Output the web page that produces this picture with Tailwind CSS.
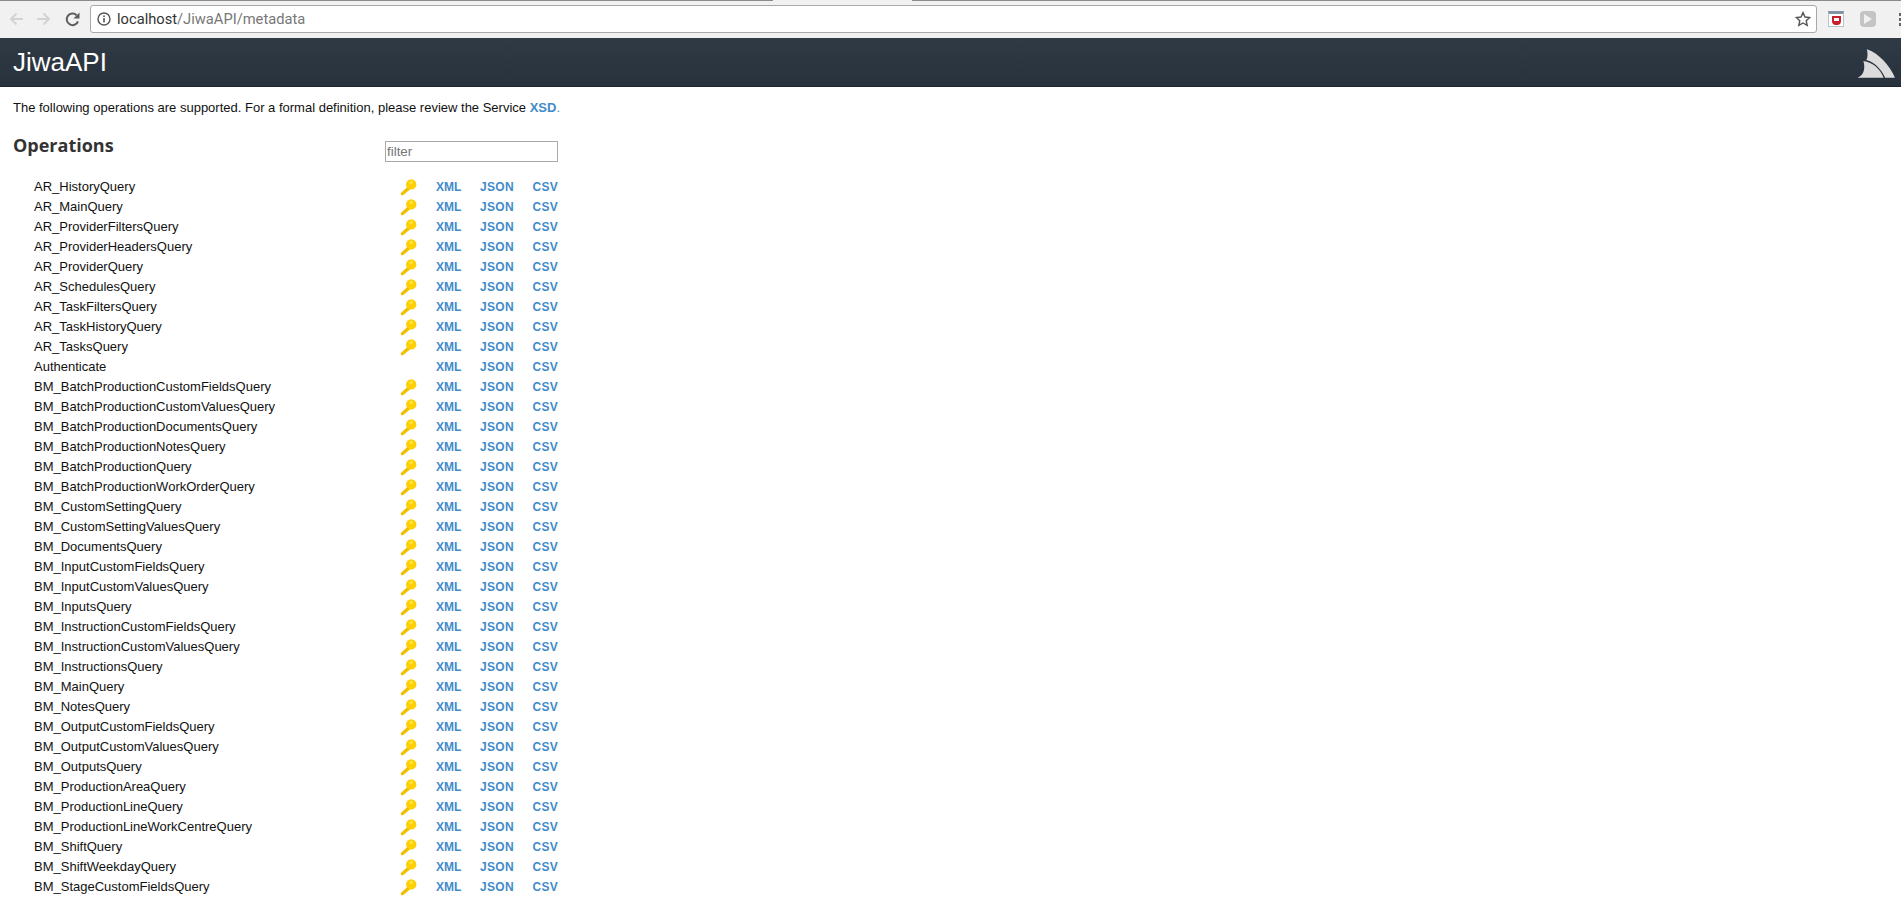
<!DOCTYPE html>
<html><head><meta charset="utf-8"><title>JiwaAPI</title>
<script src="https://cdn.jsdelivr.net/npm/@tailwindcss/browser@4"></script></head>
<body class="bg-white h-[898px] overflow-hidden font-['Liberation_Sans',sans-serif] text-[#111]">
<svg width="0" height="0" class="absolute"><defs>
<g id="k"><path d="M0.6 14.2 L8.4 7 L11 9.4 L3 16.2 L1.4 16.2 Z" fill="#f2bf00"/><circle cx="11.2" cy="5.4" r="5.2" fill="#ffd000"/><path d="M9 3.6 A3 3 0 0 1 12 1.8 A2 2 0 0 1 13 4 A3 3 0 0 1 10 5.2 Z" fill="#ffe24d"/></g>
</defs></svg>
<div class="h-[38px] bg-[#f1f1f1] relative flex items-center overflow-hidden">
  <div class="absolute top-0 left-0 w-[773px] h-px bg-[#8a8a8a]"></div>
  <div class="absolute top-0 left-[912px] right-0 h-px bg-[#8a8a8a]"></div>
  <div class="w-[90px] flex items-center shrink-0 pl-[9px] gap-[14px]">
    <svg width="14" height="14" viewBox="0 0 14 14" fill="none" stroke="#d3d3d3" stroke-width="2"><path d="M14 7H2M7.5 1.5 2 7l5.5 5.5"/></svg>
    <svg width="14" height="14" viewBox="0 0 14 14" fill="none" stroke="#d3d3d3" stroke-width="2"><path d="M0 7h12M6.5 1.5 12 7l-5.500 5.500"/></svg>
    <svg width="15" height="15" viewBox="0 0 15 15" fill="none" stroke="#5c5c5c" stroke-width="2"><path d="M13 9.300A5.800 5.800 0 1 1 11.600 3.200"/><path d="M14.500 0.500v6h-6z" fill="#5c5c5c" stroke="none"/></svg>
  </div>
  <div class="w-[1727px] h-[28px] bg-white border border-[#a9a9a9] rounded-[3px] flex items-center shrink-0 pl-[6px] pr-[5px] font-['Roboto',sans-serif] text-[14.7px]">
    <svg width="14" height="14" viewBox="0 0 14 14" fill="none" class="mr-[6px]"><circle cx="7" cy="7" r="6" stroke="#555" stroke-width="1.4"/><rect x="6.200" y="6" width="1.600" height="4.400" fill="#555"/><rect x="6.200" y="3.400" width="1.600" height="1.600" fill="#555"/></svg>
    <span class="text-[#333]">localhost</span><span class="text-[#777]">/JiwaAPI/metadata</span>
    <svg width="16" height="16" viewBox="0 0 16 16" class="ml-auto" fill="none" stroke="#555" stroke-width="1.400"><path d="M8 1.600 10 6l4.700.5-3.500 3.200 1 4.700L8 12l-4.200 2.400 1-4.700L1.300 6.500 6 6z"/></svg>
  </div>
  <div class="flex items-center shrink-0 pl-[11px]">
    <div class="w-[16px] h-[16px] bg-white border border-[#b8c4cc] border-t-[3px] border-t-[#7f95a3] flex items-center justify-center"><div class="w-[9px] h-[9px] bg-[#c8202a] rounded-b-[4px] flex items-start justify-center"><div class="w-[5px] h-[3px] bg-white mt-[2px]"></div></div></div>
    <div class="w-[16px] h-[16px] ml-[16px] bg-[#c4c4c4] rounded-[4px] flex items-center justify-center"><svg width="8" height="10" viewBox="0 0 8 10"><path d="M0 0l8 5-8 5z" fill="#f1f1f1"/></svg></div>
    <div class="flex flex-col gap-[2px] ml-[23px]"><div class="w-[3px] h-[3px] bg-[#666]"></div><div class="w-[3px] h-[3px] bg-[#666]"></div><div class="w-[3px] h-[3px] bg-[#666]"></div></div>
  </div>
</div>
<header class="h-[49px] bg-gradient-to-b from-[#2f3a45] to-[#28323c] border-b border-[#1c232a] flex items-center justify-between pl-[13px] pr-[6px]">
  <div class="text-white text-[26px] leading-none -mt-px">JiwaAPI</div>
  <svg width="38" height="29" viewBox="0 0 38.500 29" class="mt-[2px]"><path d="M10 0C22 4 33 16 38.500 29H28.500C24.500 20 18 13.500 9.500 11C11 8 11 4 10 0Z" fill="#dcdcdc"/><path d="M6.500 12C16 13.500 23.500 20 27 29H.5C6 27 9 21 6.500 12Z" fill="#dcdcdc"/></svg>
</header>
<main class="pl-[13px] w-[558px]">
  <p class="text-[13px] leading-[14px] mt-[14px] whitespace-nowrap">The following operations are supported. For a formal definition, please review the Service <a class="text-[#428bca] font-bold">XSD</a><span class="text-[#428bca]">.</span></p>
  <div class="flex justify-between items-start mt-[19px] h-[43px]">
    <h3 class="font-['Open_Sans',sans-serif] font-bold text-[18px] leading-[24px] text-[#333] -mt-[1px]">Operations</h3>
    <input placeholder="filter" class="w-[173px] h-[21px] border border-[#a9a9a9] px-px text-[13.33px] placeholder:text-[#757575] mt-[7px]">
  </div>
  <div class="pl-[21px] text-[13px] leading-[20px]">
    <div class="flex h-[20px]"><span class="w-[366px]">AR_HistoryQuery</span><svg width="17" height="17" class="mt-[2px]"><use href="#k"/></svg><a class="ml-[19px] w-[25px] text-[12px] font-bold text-[#428bca]">XML</a><a class="ml-[19px] text-[12px] tracking-[.3px] font-bold text-[#428bca]">JSON</a><a class="ml-auto text-[12px] tracking-[.3px] font-bold text-[#428bca]">CSV</a></div>
    <div class="flex h-[20px]"><span class="w-[366px]">AR_MainQuery</span><svg width="17" height="17" class="mt-[2px]"><use href="#k"/></svg><a class="ml-[19px] w-[25px] text-[12px] font-bold text-[#428bca]">XML</a><a class="ml-[19px] text-[12px] tracking-[.3px] font-bold text-[#428bca]">JSON</a><a class="ml-auto text-[12px] tracking-[.3px] font-bold text-[#428bca]">CSV</a></div>
    <div class="flex h-[20px]"><span class="w-[366px]">AR_ProviderFiltersQuery</span><svg width="17" height="17" class="mt-[2px]"><use href="#k"/></svg><a class="ml-[19px] w-[25px] text-[12px] font-bold text-[#428bca]">XML</a><a class="ml-[19px] text-[12px] tracking-[.3px] font-bold text-[#428bca]">JSON</a><a class="ml-auto text-[12px] tracking-[.3px] font-bold text-[#428bca]">CSV</a></div>
    <div class="flex h-[20px]"><span class="w-[366px]">AR_ProviderHeadersQuery</span><svg width="17" height="17" class="mt-[2px]"><use href="#k"/></svg><a class="ml-[19px] w-[25px] text-[12px] font-bold text-[#428bca]">XML</a><a class="ml-[19px] text-[12px] tracking-[.3px] font-bold text-[#428bca]">JSON</a><a class="ml-auto text-[12px] tracking-[.3px] font-bold text-[#428bca]">CSV</a></div>
    <div class="flex h-[20px]"><span class="w-[366px]">AR_ProviderQuery</span><svg width="17" height="17" class="mt-[2px]"><use href="#k"/></svg><a class="ml-[19px] w-[25px] text-[12px] font-bold text-[#428bca]">XML</a><a class="ml-[19px] text-[12px] tracking-[.3px] font-bold text-[#428bca]">JSON</a><a class="ml-auto text-[12px] tracking-[.3px] font-bold text-[#428bca]">CSV</a></div>
    <div class="flex h-[20px]"><span class="w-[366px]">AR_SchedulesQuery</span><svg width="17" height="17" class="mt-[2px]"><use href="#k"/></svg><a class="ml-[19px] w-[25px] text-[12px] font-bold text-[#428bca]">XML</a><a class="ml-[19px] text-[12px] tracking-[.3px] font-bold text-[#428bca]">JSON</a><a class="ml-auto text-[12px] tracking-[.3px] font-bold text-[#428bca]">CSV</a></div>
    <div class="flex h-[20px]"><span class="w-[366px]">AR_TaskFiltersQuery</span><svg width="17" height="17" class="mt-[2px]"><use href="#k"/></svg><a class="ml-[19px] w-[25px] text-[12px] font-bold text-[#428bca]">XML</a><a class="ml-[19px] text-[12px] tracking-[.3px] font-bold text-[#428bca]">JSON</a><a class="ml-auto text-[12px] tracking-[.3px] font-bold text-[#428bca]">CSV</a></div>
    <div class="flex h-[20px]"><span class="w-[366px]">AR_TaskHistoryQuery</span><svg width="17" height="17" class="mt-[2px]"><use href="#k"/></svg><a class="ml-[19px] w-[25px] text-[12px] font-bold text-[#428bca]">XML</a><a class="ml-[19px] text-[12px] tracking-[.3px] font-bold text-[#428bca]">JSON</a><a class="ml-auto text-[12px] tracking-[.3px] font-bold text-[#428bca]">CSV</a></div>
    <div class="flex h-[20px]"><span class="w-[366px]">AR_TasksQuery</span><svg width="17" height="17" class="mt-[2px]"><use href="#k"/></svg><a class="ml-[19px] w-[25px] text-[12px] font-bold text-[#428bca]">XML</a><a class="ml-[19px] text-[12px] tracking-[.3px] font-bold text-[#428bca]">JSON</a><a class="ml-auto text-[12px] tracking-[.3px] font-bold text-[#428bca]">CSV</a></div>
    <div class="flex h-[20px]"><span class="w-[366px]">Authenticate</span><span class="w-[17px]"></span><a class="ml-[19px] w-[25px] text-[12px] font-bold text-[#428bca]">XML</a><a class="ml-[19px] text-[12px] tracking-[.3px] font-bold text-[#428bca]">JSON</a><a class="ml-auto text-[12px] tracking-[.3px] font-bold text-[#428bca]">CSV</a></div>
    <div class="flex h-[20px]"><span class="w-[366px]">BM_BatchProductionCustomFieldsQuery</span><svg width="17" height="17" class="mt-[2px]"><use href="#k"/></svg><a class="ml-[19px] w-[25px] text-[12px] font-bold text-[#428bca]">XML</a><a class="ml-[19px] text-[12px] tracking-[.3px] font-bold text-[#428bca]">JSON</a><a class="ml-auto text-[12px] tracking-[.3px] font-bold text-[#428bca]">CSV</a></div>
    <div class="flex h-[20px]"><span class="w-[366px]">BM_BatchProductionCustomValuesQuery</span><svg width="17" height="17" class="mt-[2px]"><use href="#k"/></svg><a class="ml-[19px] w-[25px] text-[12px] font-bold text-[#428bca]">XML</a><a class="ml-[19px] text-[12px] tracking-[.3px] font-bold text-[#428bca]">JSON</a><a class="ml-auto text-[12px] tracking-[.3px] font-bold text-[#428bca]">CSV</a></div>
    <div class="flex h-[20px]"><span class="w-[366px]">BM_BatchProductionDocumentsQuery</span><svg width="17" height="17" class="mt-[2px]"><use href="#k"/></svg><a class="ml-[19px] w-[25px] text-[12px] font-bold text-[#428bca]">XML</a><a class="ml-[19px] text-[12px] tracking-[.3px] font-bold text-[#428bca]">JSON</a><a class="ml-auto text-[12px] tracking-[.3px] font-bold text-[#428bca]">CSV</a></div>
    <div class="flex h-[20px]"><span class="w-[366px]">BM_BatchProductionNotesQuery</span><svg width="17" height="17" class="mt-[2px]"><use href="#k"/></svg><a class="ml-[19px] w-[25px] text-[12px] font-bold text-[#428bca]">XML</a><a class="ml-[19px] text-[12px] tracking-[.3px] font-bold text-[#428bca]">JSON</a><a class="ml-auto text-[12px] tracking-[.3px] font-bold text-[#428bca]">CSV</a></div>
    <div class="flex h-[20px]"><span class="w-[366px]">BM_BatchProductionQuery</span><svg width="17" height="17" class="mt-[2px]"><use href="#k"/></svg><a class="ml-[19px] w-[25px] text-[12px] font-bold text-[#428bca]">XML</a><a class="ml-[19px] text-[12px] tracking-[.3px] font-bold text-[#428bca]">JSON</a><a class="ml-auto text-[12px] tracking-[.3px] font-bold text-[#428bca]">CSV</a></div>
    <div class="flex h-[20px]"><span class="w-[366px]">BM_BatchProductionWorkOrderQuery</span><svg width="17" height="17" class="mt-[2px]"><use href="#k"/></svg><a class="ml-[19px] w-[25px] text-[12px] font-bold text-[#428bca]">XML</a><a class="ml-[19px] text-[12px] tracking-[.3px] font-bold text-[#428bca]">JSON</a><a class="ml-auto text-[12px] tracking-[.3px] font-bold text-[#428bca]">CSV</a></div>
    <div class="flex h-[20px]"><span class="w-[366px]">BM_CustomSettingQuery</span><svg width="17" height="17" class="mt-[2px]"><use href="#k"/></svg><a class="ml-[19px] w-[25px] text-[12px] font-bold text-[#428bca]">XML</a><a class="ml-[19px] text-[12px] tracking-[.3px] font-bold text-[#428bca]">JSON</a><a class="ml-auto text-[12px] tracking-[.3px] font-bold text-[#428bca]">CSV</a></div>
    <div class="flex h-[20px]"><span class="w-[366px]">BM_CustomSettingValuesQuery</span><svg width="17" height="17" class="mt-[2px]"><use href="#k"/></svg><a class="ml-[19px] w-[25px] text-[12px] font-bold text-[#428bca]">XML</a><a class="ml-[19px] text-[12px] tracking-[.3px] font-bold text-[#428bca]">JSON</a><a class="ml-auto text-[12px] tracking-[.3px] font-bold text-[#428bca]">CSV</a></div>
    <div class="flex h-[20px]"><span class="w-[366px]">BM_DocumentsQuery</span><svg width="17" height="17" class="mt-[2px]"><use href="#k"/></svg><a class="ml-[19px] w-[25px] text-[12px] font-bold text-[#428bca]">XML</a><a class="ml-[19px] text-[12px] tracking-[.3px] font-bold text-[#428bca]">JSON</a><a class="ml-auto text-[12px] tracking-[.3px] font-bold text-[#428bca]">CSV</a></div>
    <div class="flex h-[20px]"><span class="w-[366px]">BM_InputCustomFieldsQuery</span><svg width="17" height="17" class="mt-[2px]"><use href="#k"/></svg><a class="ml-[19px] w-[25px] text-[12px] font-bold text-[#428bca]">XML</a><a class="ml-[19px] text-[12px] tracking-[.3px] font-bold text-[#428bca]">JSON</a><a class="ml-auto text-[12px] tracking-[.3px] font-bold text-[#428bca]">CSV</a></div>
    <div class="flex h-[20px]"><span class="w-[366px]">BM_InputCustomValuesQuery</span><svg width="17" height="17" class="mt-[2px]"><use href="#k"/></svg><a class="ml-[19px] w-[25px] text-[12px] font-bold text-[#428bca]">XML</a><a class="ml-[19px] text-[12px] tracking-[.3px] font-bold text-[#428bca]">JSON</a><a class="ml-auto text-[12px] tracking-[.3px] font-bold text-[#428bca]">CSV</a></div>
    <div class="flex h-[20px]"><span class="w-[366px]">BM_InputsQuery</span><svg width="17" height="17" class="mt-[2px]"><use href="#k"/></svg><a class="ml-[19px] w-[25px] text-[12px] font-bold text-[#428bca]">XML</a><a class="ml-[19px] text-[12px] tracking-[.3px] font-bold text-[#428bca]">JSON</a><a class="ml-auto text-[12px] tracking-[.3px] font-bold text-[#428bca]">CSV</a></div>
    <div class="flex h-[20px]"><span class="w-[366px]">BM_InstructionCustomFieldsQuery</span><svg width="17" height="17" class="mt-[2px]"><use href="#k"/></svg><a class="ml-[19px] w-[25px] text-[12px] font-bold text-[#428bca]">XML</a><a class="ml-[19px] text-[12px] tracking-[.3px] font-bold text-[#428bca]">JSON</a><a class="ml-auto text-[12px] tracking-[.3px] font-bold text-[#428bca]">CSV</a></div>
    <div class="flex h-[20px]"><span class="w-[366px]">BM_InstructionCustomValuesQuery</span><svg width="17" height="17" class="mt-[2px]"><use href="#k"/></svg><a class="ml-[19px] w-[25px] text-[12px] font-bold text-[#428bca]">XML</a><a class="ml-[19px] text-[12px] tracking-[.3px] font-bold text-[#428bca]">JSON</a><a class="ml-auto text-[12px] tracking-[.3px] font-bold text-[#428bca]">CSV</a></div>
    <div class="flex h-[20px]"><span class="w-[366px]">BM_InstructionsQuery</span><svg width="17" height="17" class="mt-[2px]"><use href="#k"/></svg><a class="ml-[19px] w-[25px] text-[12px] font-bold text-[#428bca]">XML</a><a class="ml-[19px] text-[12px] tracking-[.3px] font-bold text-[#428bca]">JSON</a><a class="ml-auto text-[12px] tracking-[.3px] font-bold text-[#428bca]">CSV</a></div>
    <div class="flex h-[20px]"><span class="w-[366px]">BM_MainQuery</span><svg width="17" height="17" class="mt-[2px]"><use href="#k"/></svg><a class="ml-[19px] w-[25px] text-[12px] font-bold text-[#428bca]">XML</a><a class="ml-[19px] text-[12px] tracking-[.3px] font-bold text-[#428bca]">JSON</a><a class="ml-auto text-[12px] tracking-[.3px] font-bold text-[#428bca]">CSV</a></div>
    <div class="flex h-[20px]"><span class="w-[366px]">BM_NotesQuery</span><svg width="17" height="17" class="mt-[2px]"><use href="#k"/></svg><a class="ml-[19px] w-[25px] text-[12px] font-bold text-[#428bca]">XML</a><a class="ml-[19px] text-[12px] tracking-[.3px] font-bold text-[#428bca]">JSON</a><a class="ml-auto text-[12px] tracking-[.3px] font-bold text-[#428bca]">CSV</a></div>
    <div class="flex h-[20px]"><span class="w-[366px]">BM_OutputCustomFieldsQuery</span><svg width="17" height="17" class="mt-[2px]"><use href="#k"/></svg><a class="ml-[19px] w-[25px] text-[12px] font-bold text-[#428bca]">XML</a><a class="ml-[19px] text-[12px] tracking-[.3px] font-bold text-[#428bca]">JSON</a><a class="ml-auto text-[12px] tracking-[.3px] font-bold text-[#428bca]">CSV</a></div>
    <div class="flex h-[20px]"><span class="w-[366px]">BM_OutputCustomValuesQuery</span><svg width="17" height="17" class="mt-[2px]"><use href="#k"/></svg><a class="ml-[19px] w-[25px] text-[12px] font-bold text-[#428bca]">XML</a><a class="ml-[19px] text-[12px] tracking-[.3px] font-bold text-[#428bca]">JSON</a><a class="ml-auto text-[12px] tracking-[.3px] font-bold text-[#428bca]">CSV</a></div>
    <div class="flex h-[20px]"><span class="w-[366px]">BM_OutputsQuery</span><svg width="17" height="17" class="mt-[2px]"><use href="#k"/></svg><a class="ml-[19px] w-[25px] text-[12px] font-bold text-[#428bca]">XML</a><a class="ml-[19px] text-[12px] tracking-[.3px] font-bold text-[#428bca]">JSON</a><a class="ml-auto text-[12px] tracking-[.3px] font-bold text-[#428bca]">CSV</a></div>
    <div class="flex h-[20px]"><span class="w-[366px]">BM_ProductionAreaQuery</span><svg width="17" height="17" class="mt-[2px]"><use href="#k"/></svg><a class="ml-[19px] w-[25px] text-[12px] font-bold text-[#428bca]">XML</a><a class="ml-[19px] text-[12px] tracking-[.3px] font-bold text-[#428bca]">JSON</a><a class="ml-auto text-[12px] tracking-[.3px] font-bold text-[#428bca]">CSV</a></div>
    <div class="flex h-[20px]"><span class="w-[366px]">BM_ProductionLineQuery</span><svg width="17" height="17" class="mt-[2px]"><use href="#k"/></svg><a class="ml-[19px] w-[25px] text-[12px] font-bold text-[#428bca]">XML</a><a class="ml-[19px] text-[12px] tracking-[.3px] font-bold text-[#428bca]">JSON</a><a class="ml-auto text-[12px] tracking-[.3px] font-bold text-[#428bca]">CSV</a></div>
    <div class="flex h-[20px]"><span class="w-[366px]">BM_ProductionLineWorkCentreQuery</span><svg width="17" height="17" class="mt-[2px]"><use href="#k"/></svg><a class="ml-[19px] w-[25px] text-[12px] font-bold text-[#428bca]">XML</a><a class="ml-[19px] text-[12px] tracking-[.3px] font-bold text-[#428bca]">JSON</a><a class="ml-auto text-[12px] tracking-[.3px] font-bold text-[#428bca]">CSV</a></div>
    <div class="flex h-[20px]"><span class="w-[366px]">BM_ShiftQuery</span><svg width="17" height="17" class="mt-[2px]"><use href="#k"/></svg><a class="ml-[19px] w-[25px] text-[12px] font-bold text-[#428bca]">XML</a><a class="ml-[19px] text-[12px] tracking-[.3px] font-bold text-[#428bca]">JSON</a><a class="ml-auto text-[12px] tracking-[.3px] font-bold text-[#428bca]">CSV</a></div>
    <div class="flex h-[20px]"><span class="w-[366px]">BM_ShiftWeekdayQuery</span><svg width="17" height="17" class="mt-[2px]"><use href="#k"/></svg><a class="ml-[19px] w-[25px] text-[12px] font-bold text-[#428bca]">XML</a><a class="ml-[19px] text-[12px] tracking-[.3px] font-bold text-[#428bca]">JSON</a><a class="ml-auto text-[12px] tracking-[.3px] font-bold text-[#428bca]">CSV</a></div>
    <div class="flex h-[20px]"><span class="w-[366px]">BM_StageCustomFieldsQuery</span><svg width="17" height="17" class="mt-[2px]"><use href="#k"/></svg><a class="ml-[19px] w-[25px] text-[12px] font-bold text-[#428bca]">XML</a><a class="ml-[19px] text-[12px] tracking-[.3px] font-bold text-[#428bca]">JSON</a><a class="ml-auto text-[12px] tracking-[.3px] font-bold text-[#428bca]">CSV</a></div>
  </div>
</main>
</body></html>
